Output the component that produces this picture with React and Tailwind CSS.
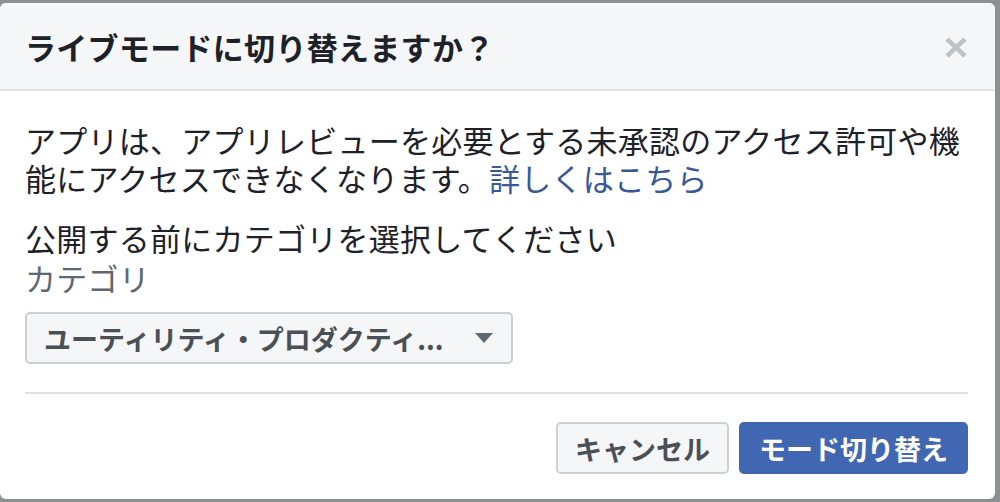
import React from "react";

const font = { fontFamily: '"Noto Sans CJK JP", "Noto Sans", sans-serif' };

export default function App() {
  return (
    <div
      className="w-[1000px] h-[502px] bg-[#8e9094] pt-[3px] overflow-hidden"
      style={font}
    >
      <div className="w-[995px] h-[496px] bg-white rounded-[6px] overflow-hidden flex flex-col">
        {/* header */}
        <div className="h-[88px] shrink-0 bg-[#f5f6f7] border-b-2 border-[#e5e5e5] flex items-center justify-between pl-[25px] pr-[28px]">
          <h2 className="text-[31px] font-bold text-[#1d2129] leading-none tracking-[0.3px]">
            ライブモードに切り替えますか？
          </h2>
          <svg width="22" height="21" viewBox="0 0 22 21" className="mt-[2px]">
            <path d="M2 2 L20 19 M20 2 L2 19" stroke="#bec3c9" strokeWidth="4.5" strokeLinecap="butt" />
          </svg>
        </div>

        {/* body */}
        <div className="pl-[25px] pr-[27px] pt-[30px] text-[31px] leading-[38px] tracking-[0.25px] text-[#1d2129]">
          <p>
            アプリは、アプリレビューを必要とする未承認のアクセス許可や機能にアクセスできなくなります。
            <a className="text-[#385898]">詳しくはこちら</a>
          </p>
          <p className="mt-[22px]">公開する前にカテゴリを選択してください</p>
          <p className="mt-[2px] text-[#606770]">カテゴリ</p>

          <div className="mt-[15px] w-[488px] h-[52px] bg-[#f5f6f7] border-2 border-[#ccd0d5] rounded-[5px] flex items-center justify-between pl-[17px] pr-[18px] tracking-normal">
            <span className="text-[27px] font-bold text-[#4b4f56] leading-none">
              ユーティリティ・プロダクティ...
            </span>
            <svg width="18" height="11" viewBox="0 0 18 11">
              <path d="M0 0 H18 L9 10 Z" fill="#606770" />
            </svg>
          </div>

          <div className="mt-[28px] h-[2px] bg-[#dddfe2]" />

          <div className="mt-[28px] flex justify-end gap-[10px] tracking-normal">
            <button className="h-[52px] px-[17px] bg-[#f5f6f7] border-2 border-[#ccd0d5] rounded-[5px] text-[27px] font-bold text-[#4b4f56] leading-none">
              キャンセル
            </button>
            <button className="h-[52px] px-[18px] bg-[#4267b2] border-2 border-[#4267b2] rounded-[5px] text-[27px] font-bold text-white leading-none">
              モード切り替え
            </button>
          </div>
        </div>
      </div>
    </div>
  );
}
